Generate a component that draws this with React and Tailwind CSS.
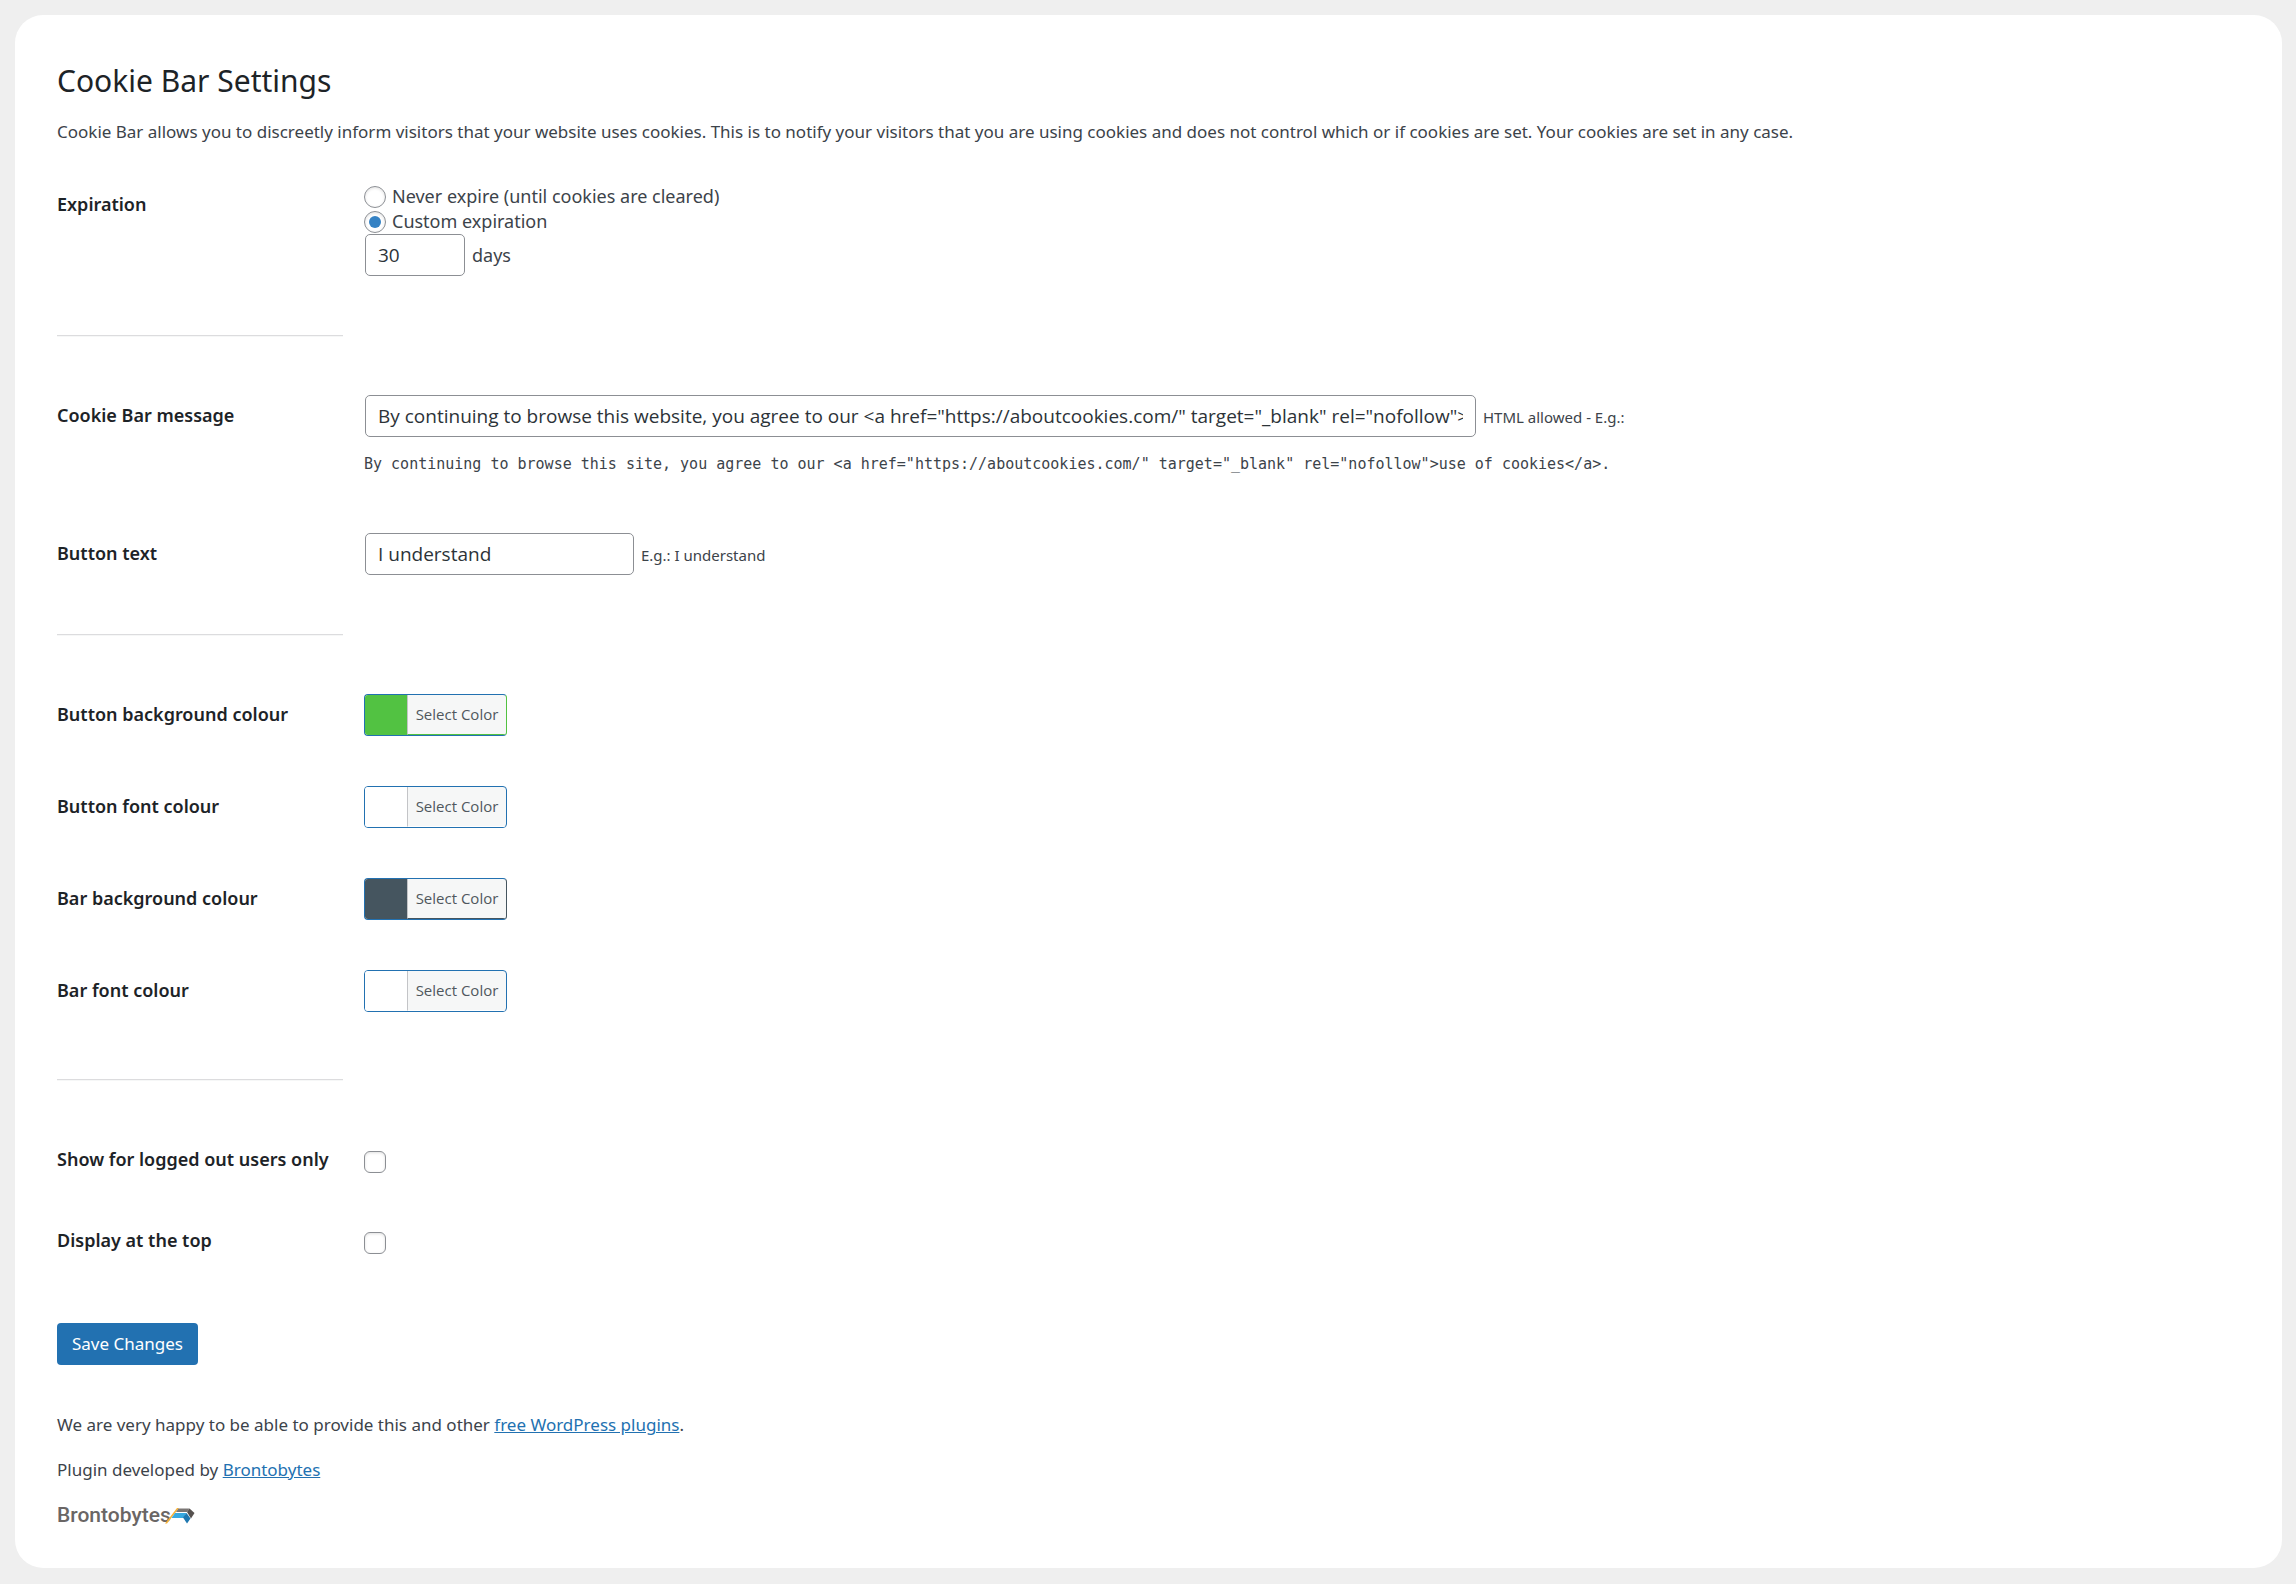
import { useState } from 'react';

const MESSAGE =
  'By continuing to browse this website, you agree to our <a href="https://aboutcookies.com/" target="_blank" rel="nofollow">use of cookies</a>.';
const EXAMPLE =
  'By continuing to browse this site, you agree to our <a href="https://aboutcookies.com/" target="_blank" rel="nofollow">use of cookies</a>.';

const inputClass =
  "mx-px h-[42px] rounded-[5px] border border-[#8c8f94] bg-white px-3 font-['Open_Sans','Noto_Sans',sans-serif] text-[19px] text-[#2c3338] outline-none focus:border-[#2271b1]";

const choiceClass =
  'size-[22px] shrink-0 appearance-none border border-[#8c8f94] bg-white shadow-[inset_0_1px_3px_rgba(0,0,0,0.12)]';

function Row({ label, htmlFor, className = '', children }) {
  return (
    <div className={`grid grid-cols-[286px_minmax(0,1fr)] gap-x-[21px] py-[21px] ${className}`}>
      <div className="pt-[7px] text-[18px] leading-[26px] font-semibold whitespace-nowrap text-[#1d2327]">
        {htmlFor ? <label htmlFor={htmlFor}>{label}</label> : <span>{label}</span>}
      </div>
      <div>{children}</div>
    </div>
  );
}

function Divider() {
  return (
    <div className="flex h-[77px] items-center">
      <hr className="w-[286px] border-t border-b border-t-[#dcdcde] border-b-[#f6f7f7]" />
    </div>
  );
}

function ColorButton({ id, color }) {
  return (
    <button
      id={id}
      type="button"
      className="flex h-[42px] overflow-hidden rounded-[4px] border border-[#2271b1] bg-[#f6f7f7] font-['Open_Sans','Noto_Sans',sans-serif] text-[15px] text-[#50575e]"
      style={color === '#ffffff' ? undefined : { borderRightColor: color }}
    >
      <span className="h-full w-[42px]" style={{ backgroundColor: color }} />
      <span
        className="flex h-full w-[99px] items-center justify-center border-b border-l border-l-[#c3c4c7] whitespace-nowrap"
        style={{ borderBottomColor: color }}
      >
        Select Color
      </span>
    </button>
  );
}

function BrontobytesLogo() {
  return (
    <a
      href="#brontobytes"
      className="flex w-fit items-center font-[Roboto,sans-serif] text-[21px] leading-[28px] font-medium text-[#6a6665]"
    >
      Brontobytes
      <svg viewBox="0 0 30 17" className="-ml-1.5 h-[17px] w-[30px]" aria-hidden="true">
        <path d="M0 16.5 12 1h2L2 16.5z" fill="#f9b233" />
        <path d="M13.5 1.5h11L22 5H11z" fill="#7a7674" />
        <path d="M24.5 1.5 29.5 6 26 11.5 22 5z" fill="#56514f" />
        <path d="M10 6h11.5l-3 5H6.500z" fill="#38a9e0" />
        <path d="M21.500 6l4 5.500-3.500 5-4-6z" fill="#1f78b0" />
      </svg>
    </a>
  );
}

const colorFields = [
  { id: 'button-bg', label: 'Button background colour', color: '#52c242' },
  { id: 'button-font', label: 'Button font colour', color: '#ffffff' },
  { id: 'bar-bg', label: 'Bar background colour', color: '#45555f' },
  { id: 'bar-font', label: 'Bar font colour', color: '#ffffff' },
];

function App() {
  const [expiration, setExpiration] = useState('custom');
  const [days, setDays] = useState('30');
  const [message, setMessage] = useState(MESSAGE);
  const [buttonText, setButtonText] = useState('I understand');

  return (
    <div className="min-h-screen bg-[#efefef] py-[15px] pr-[14px] pl-[15px] font-['Noto_Sans','Open_Sans',sans-serif] text-[#3c434a]">
      <main className="rounded-[28px] bg-white px-[42px] pt-[42px] pb-[39px]">
        <h1 className="text-[30px] leading-[48px] text-[#1d2327]">Cookie Bar Settings</h1>
        <p className="mt-[14px] text-[17px] leading-[26px]">
          Cookie Bar allows you to discreetly inform visitors that your website uses cookies. This is to notify your
          visitors that you are using cookies and does not control which or if cookies are set. Your cookies are set in
          any case.
        </p>

        <form className="mt-[18px]" onSubmit={(e) => e.preventDefault()}>
          <Row label="Expiration">
            <div role="radiogroup" aria-label="Expiration" className="text-[18px] leading-[25px]">
              <label className="flex h-[25px] w-fit items-center gap-[6px]">
                <input
                  type="radio"
                  name="expiration"
                  className={`${choiceClass} grid place-content-center rounded-full before:size-3 before:rounded-full checked:before:bg-[#3582c4]`}
                  checked={expiration === 'never'}
                  onChange={() => setExpiration('never')}
                />
                Never expire (until cookies are cleared)
              </label>
              <label className="flex h-[25px] w-fit items-center gap-[6px]">
                <input
                  type="radio"
                  name="expiration"
                  className={`${choiceClass} grid place-content-center rounded-full before:size-3 before:rounded-full checked:before:bg-[#3582c4]`}
                  checked={expiration === 'custom'}
                  onChange={() => setExpiration('custom')}
                />
                Custom expiration
              </label>
              <label className="flex w-fit items-baseline gap-[6px]">
                <input
                  type="text"
                  className={`${inputClass} w-[100px]`}
                  value={days}
                  onChange={(e) => setDays(e.target.value)}
                />
                days
              </label>
            </div>
          </Row>

          <Divider />

          <Row label="Cookie Bar message" htmlFor="message">
            <div className="flex items-baseline gap-[6px]">
              <input
                id="message"
                type="text"
                className={`${inputClass} w-[1111px]`}
                value={message}
                onChange={(e) => setMessage(e.target.value)}
              />
              <small className="text-[15px]">HTML allowed - E.g.:</small>
            </div>
            <code className="mt-[15px] mb-[14px] block font-['DejaVu_Sans_Mono',monospace] text-[15px] leading-[25px]">
              {EXAMPLE}
            </code>
          </Row>

          <Row label="Button text" htmlFor="button-text">
            <div className="flex items-baseline gap-[6px]">
              <input
                id="button-text"
                type="text"
                className={`${inputClass} w-[269px]`}
                value={buttonText}
                onChange={(e) => setButtonText(e.target.value)}
              />
              <small className="text-[15px]">E.g.: I understand</small>
            </div>
          </Row>

          <Divider />

          {colorFields.map((field) => (
            <Row key={field.id} label={field.label} htmlFor={field.id} className="h-[92px]">
              <ColorButton id={field.id} color={field.color} />
            </Row>
          ))}

          <Divider />

          <Row label="Show for logged out users only" htmlFor="logged-out" className="h-[81px]">
            <input id="logged-out" type="checkbox" className={`${choiceClass} mt-3 block rounded-[6px] checked:bg-[#3582c4]`} />
          </Row>
          <Row label="Display at the top" htmlFor="display-top" className="h-[81px]">
            <input id="display-top" type="checkbox" className={`${choiceClass} mt-3 block rounded-[6px] checked:bg-[#3582c4]`} />
          </Row>

          <button type="submit" className="mt-[43px] h-[42px] rounded-[4px] bg-[#2271b1] px-[15px] text-[17px] text-white">
            Save Changes
          </button>
        </form>

        {/* Credits */}
        <div className="mt-[46px] space-y-[18px] text-[17px] leading-[27px]">
          <p>
            We are very happy to be able to provide this and other{' '}
            <a href="#plugins" className="text-[#2271b1] underline">
              free WordPress plugins
            </a>
            .
          </p>
          <p>
            Plugin developed by{' '}
            <a href="#brontobytes" className="text-[#2271b1] underline">
              Brontobytes
            </a>
          </p>
          <BrontobytesLogo />
        </div>
      </main>
    </div>
  );
}

export default App;
